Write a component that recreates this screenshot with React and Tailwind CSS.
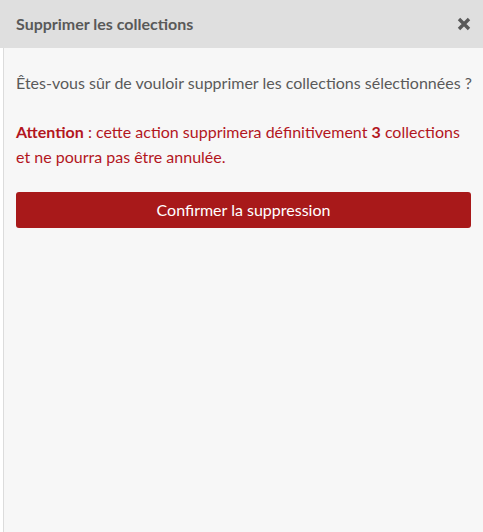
export default function App() {
    return (
        <div className="w-[483px] h-[532px] flex flex-col bg-white overflow-hidden" style={{ fontFamily: 'Lato, "Open Sans", sans-serif' }}>
            <div className="h-[48px] shrink-0 bg-[#dfdfdf] flex items-center justify-between pl-4 pr-[12px]">
                <h1 className="text-[16px] font-bold text-[#595959]">Supprimer les collections</h1>
                <button className="w-[14px] h-[14px] flex items-center justify-center text-[#595959]">
                    <svg viewBox="0 0 14 14" width="14" height="14">
                        <path d="M2 2 L12 12 M12 2 L2 12" stroke="currentColor" strokeWidth="3.4" strokeLinecap="butt" />
                    </svg>
                </button>
            </div>
            <div className="flex-1 ml-[3px] border-l border-[#dcdcdc] bg-[#f7f7f7] pl-[12px] pr-[12px] pt-[24px] flex flex-col">
                <p className="text-[16px] leading-[22px] text-[#5a5a5a] whitespace-nowrap">
                    Êtes-vous sûr de vouloir supprimer les collections sélectionnées{'\u00a0'}?
                </p>
                <p className="mt-[25px] text-[16px] leading-[25px] text-[#b3161e]">
                    <strong className="font-bold">Attention</strong>{'\u00a0'}: cette action supprimera définitivement <strong className="font-bold">3</strong> collections et ne pourra pas être annulée.
                </p>
                <button className="mt-[23px] h-[36px] w-full rounded-[3px] bg-[#a8191a] text-white text-[16px]">
                    Confirmer la suppression
                </button>
            </div>
        </div>
    );
}
